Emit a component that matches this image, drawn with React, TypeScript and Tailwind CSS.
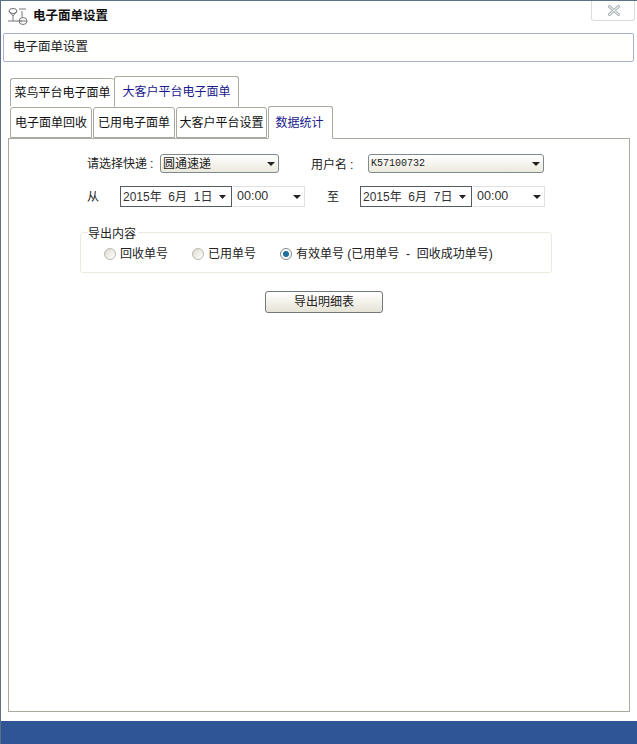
import React from "react";

const cjk = "font-['Liberation_Sans','Noto_Sans_CJK_SC',sans-serif]";

const Arrow = ({ w = 7 }: { w?: number }) => (
  <svg width={w} height="4" viewBox="0 0 8 4" preserveAspectRatio="none" className="shrink-0">
    <path d="M0 0h8L4 4z" fill="#222" />
  </svg>
);

const ComboGray = ({ text, className }: { text: string; className: string }) => (
  <div
    className={`flex h-[19px] items-center justify-between rounded-[3px] border border-[#7f8a90] bg-gradient-to-b from-white to-[#ebe9dc] pl-[2px] pr-[3px] ${className}`}
  >
    <span>{text}</span>
    <Arrow w={8} />
  </div>
);

const DateBox = ({ text }: { text: string }) => (
  <div className="flex h-[21px] w-[112px] items-center justify-between border border-[#555c60] bg-white pl-[2px] pr-[5px] text-[12px] text-[#333]">
    <span className="whitespace-pre">{text}</span>
    <Arrow />
  </div>
);

const TimeBox = () => (
  <div className="ml-[1px] flex h-[21px] w-[72px] items-center justify-between border-y border-r border-[#e0e0e0] bg-white pl-[4px] pr-[3px] text-[12.5px] text-[#333]">
    <span>00:00</span>
    <Arrow w={8} />
  </div>
);

const Radio = ({ label, on }: { label: string; on?: boolean }) => (
  <div className="flex items-center gap-[4px]">
    <span
      className={`flex size-[12px] items-center justify-center rounded-full border ${
        on ? "border-[#7a8a90] bg-white" : "border-[#b9b9ae] bg-gradient-to-br from-[#dddcd0] to-white"
      }`}
    >
      {on && <span className="size-[6px] rounded-full bg-[#1f6f9f]" />}
    </span>
    <span className="whitespace-pre">{label}</span>
  </div>
);

const Tab = ({ label, active, className }: { label: string; active?: boolean; className: string }) => (
  <div
    className={`flex items-center justify-center rounded-t-[3px] border border-[#a9a99f] bg-white whitespace-nowrap ${
      active ? "-mb-[1px] border-b-white text-[#1a1a8c]" : "text-[#111]"
    } ${className}`}
  >
    {label}
  </div>
);

export default function App() {
  return (
    <div className={`${cjk} flex h-[744px] w-[637px] flex-col overflow-hidden border-l border-t border-[#5b6f86] bg-white text-[12px] text-[#222]`}>
      {/* title bar */}
      <div className="flex h-[32px] shrink-0 items-center pb-[2px] pl-[6px]">
        <svg width="22" height="20" viewBox="0 0 22 20" fill="none" stroke="#777" strokeWidth="1">
          <ellipse cx="6" cy="5" rx="4" ry="2.5" />
          <path d="M2 5l4 5 4-5M6 10v5M1 15h14M15 5v6M12 3h7" />
          <ellipse cx="16" cy="15" rx="4" ry="3.5" />
          <path d="M12 15h8" />
        </svg>
        <span className="ml-[4px] text-[12.5px] font-bold text-[#111]">电子面单设置</span>
        <div className="relative ml-auto mr-[2px] -mt-[10px] flex h-[20px] w-[44px] items-center justify-center rounded-b-[3px] border-x border-b border-[#dcdcd6] pl-[2px]">
          <svg width="12" height="11" viewBox="0 0 12 11" fill="none" strokeLinecap="square">
            <path d="M1.5 1.5l9 8M10.5 1.5l-9 8" stroke="#aeb5b9" strokeWidth="3" />
            <path d="M1.5 1.5l9 8M10.5 1.5l-9 8" stroke="#fff" strokeWidth="1" />
          </svg>
        </div>
      </div>

      {/* header */}
      <div className="mx-[2px] mr-[3px] flex h-[29px] shrink-0 items-center rounded-[2px] border border-[#a9b0cf] bg-[#fffffd] pl-[9px] text-[12.5px] text-[#222]">
        电子面单设置
      </div>

      {/* outer tabs */}
      <div className="ml-[9px] mt-[13px] flex h-[31px] shrink-0 items-end">
        <Tab label="菜鸟平台电子面单" className="h-[28px] w-[104px] border-r-0 border-b-0" />
        <Tab label="大客户平台电子面单" active className="h-[31px] w-[125px] text-[12px]" />
      </div>

      {/* inner tabs */}
      <div className="relative z-10 ml-[9px] mt-[1px] flex h-[31px] shrink-0 items-end gap-[1px]">
        <Tab label="电子面单回收" className="h-[31px] w-[82px]" />
        <Tab label="已用电子面单" className="h-[31px] w-[82px]" />
        <Tab label="大客户平台设置" className="h-[31px] w-[91px]" />
        <Tab label="数据统计" active className="h-[33px] w-[65px] pr-[2px]" />
      </div>

      {/* panel */}
      <div className="mx-[7px] mr-[7px] flex min-h-0 flex-1 flex-col border border-[#a9a99f] bg-white text-[12px]">
        <div className="ml-[78px] mt-[15px] flex h-[19px] items-center">
          <span className="w-[73px]">
            请选择快递<span className="ml-[3px]">:</span>
          </span>
          <ComboGray text="圆通速递" className="w-[119px]" />
          <span className="ml-[32px] mt-[3px] w-[57px]">
            用户名<span className="ml-[3px]">:</span>
          </span>
          <ComboGray text="K57100732" className="w-[176px] font-['Liberation_Mono',monospace] text-[10px]" />
        </div>

        <div className="ml-[78px] mt-[13px] flex h-[21px] items-center">
          <span className="w-[33px]">从</span>
          <DateBox text="2015年  6月  1日" />
          <TimeBox />
          <span className="ml-[22px] w-[33px]">至</span>
          <DateBox text="2015年  6月  7日" />
          <TimeBox />
        </div>

        <div className="relative ml-[71px] mt-[25px] flex h-[41px] w-[472px] items-center gap-[24px] rounded-[3px] border border-[#ecebdf] pl-[23px] pt-[3px]">
          <span className="absolute -top-[8px] left-[7px] bg-white pr-[2px]">导出内容</span>
          <Radio label="回收单号" />
          <Radio label="已用单号" />
          <Radio label="有效单号 (已用单号  -  回收成功单号)" on />
        </div>

        <div className="ml-[256px] mt-[18px] flex h-[22px] w-[118px] items-center justify-center rounded-[3px] border border-[#71787c] bg-gradient-to-b from-white to-[#e6e4d6]">
          导出明细表
        </div>
      </div>

      <div className="mt-[9px] h-[23px] shrink-0 bg-[#2f5597]" />
    </div>
  );
}
